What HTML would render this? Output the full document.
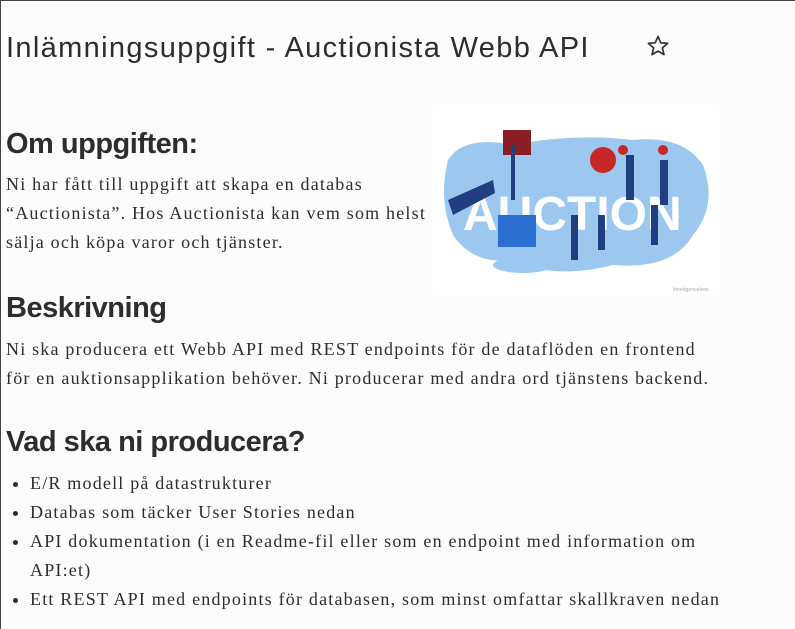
<!DOCTYPE html>
<html><head><meta charset="utf-8"><style>
html,body{margin:0;padding:0}
body{width:795px;height:629px;overflow:hidden;background:#fcfcfc;font-family:"Liberation Serif",serif;color:#2d2d2d;position:relative;border-left:1px solid #444;border-top:1px solid #444;box-sizing:border-box}
.t{position:absolute;left:5px;top:31px;font-family:"Liberation Sans",sans-serif;font-size:29px;letter-spacing:1.35px;color:#2d2d2d;white-space:nowrap}
.h{position:absolute;left:5px;font-family:"Liberation Sans",sans-serif;font-weight:bold;font-size:29px;letter-spacing:-0.5px;white-space:nowrap}
.p{position:absolute;left:5px;font-size:18px;line-height:29px;letter-spacing:1.2px;white-space:nowrap}
ul{position:absolute;left:5px;top:468px;margin:0;padding-left:24px;font-size:18px;line-height:29px;letter-spacing:1.2px}
</style></head><body>
<div class="t">Inlämningsuppgift - Auctionista Webb API</div>
<svg style="position:absolute;left:645px;top:33px" width="24" height="24" viewBox="0 0 24 24"><path d="M12 2.5l2.8 6.3 6.8.6-5.2 4.5 1.6 6.7L12 17.1 6 20.6l1.6-6.7-5.2-4.5 6.8-.6z" fill="none" stroke="#333" stroke-width="1.7" stroke-linejoin="round"/></svg>
<div class="h" style="top:127px">Om uppgiften:</div>
<div class="p" style="top:169px">Ni har fått till uppgift att skapa en databas<br>“Auctionista”. Hos Auctionista kan vem som helst<br>sälja och köpa varor och tjänster.</div>
<svg style="position:absolute;left:432px;top:104px" width="286" height="190" viewBox="0 0 286 190">
<rect width="286" height="190" fill="#fff"/>
<path d="M15 55 Q30 30 80 40 Q140 28 200 35 Q250 30 270 60 Q285 100 260 130 Q240 165 180 160 Q120 175 80 155 Q40 160 20 130 Q5 95 15 55z" fill="#9cc8f0"/>
<ellipse cx="90" cy="160" rx="30" ry="8" fill="#9cc8f0"/>
<text x="30" y="125" font-family="Liberation Sans,sans-serif" font-weight="bold" font-size="48" fill="#fff">AUCTION</text>
<path d="M15 95 L60 75 L62 88 L20 110z" fill="#1f3f80"/>
<rect x="70" y="25" width="28" height="25" fill="#8b1e24"/>
<rect x="78" y="40" width="4" height="55" fill="#1f3f80"/>
<rect x="65" y="110" width="38" height="32" fill="#2a6fd0"/>
<circle cx="170" cy="55" r="13" fill="#c62828"/>
<circle cx="190" cy="45" r="5" fill="#c62828"/><circle cx="230" cy="45" r="5" fill="#c62828"/>
<rect x="193" y="50" width="8" height="45" fill="#1f3f80"/><rect x="227" y="55" width="8" height="45" fill="#1f3f80"/>
<rect x="138" y="110" width="7" height="45" fill="#1f3f80"/><rect x="165" y="110" width="7" height="35" fill="#1f3f80"/>
<rect x="218" y="100" width="7" height="40" fill="#1f3f80"/>
<text x="240" y="186" font-size="5" fill="#aaa" font-family="Liberation Sans,sans-serif">theedgemarkets</text>
</svg>
<div class="h" style="top:291px">Beskrivning</div>
<div class="p" style="top:334px">Ni ska producera ett Webb API med REST endpoints för de dataflöden en frontend<br>för en auktionsapplikation behöver. Ni producerar med andra ord tjänstens backend.</div>
<div class="h" style="top:425px">Vad ska ni producera?</div>
<ul>
<li>E/R modell på datastrukturer</li>
<li>Databas som täcker User Stories nedan</li>
<li>API dokumentation (i en Readme-fil eller som en endpoint med information om<br>API:et)</li>
<li>Ett REST API med endpoints för databasen, som minst omfattar skallkraven nedan</li>
</ul>
</body></html>
